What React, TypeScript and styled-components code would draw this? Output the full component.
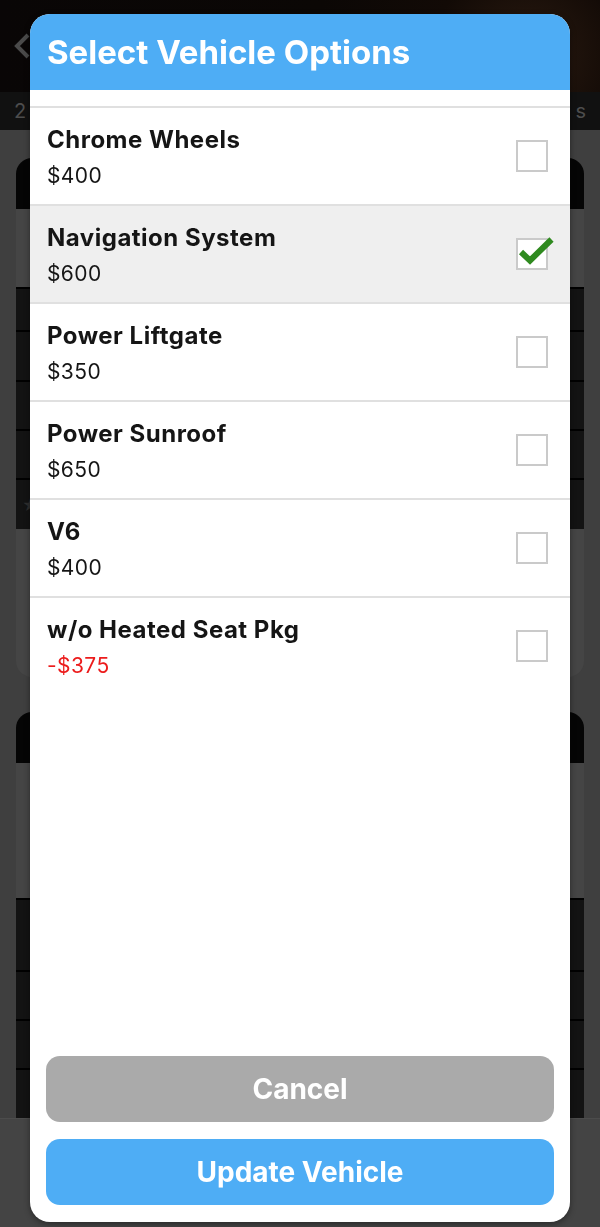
import React, { useState } from 'react';
import styled, { createGlobalStyle } from 'styled-components';

const GlobalStyle = createGlobalStyle`
    html, body {
        margin: 0;
        padding: 0;
        background: #3f3f3f;
        font-family: Inter, "Noto Sans", "Liberation Sans", sans-serif;
    }
    * {
        box-sizing: border-box;
    }
`;

const Page = styled.div`
    width: 600px;
    height: 1227px;
    overflow: hidden;
    background: #3f3f3f;
    display: flex;
    flex-direction: column;
`;

const TopBar = styled.div`
    height: 92px;
    flex-shrink: 0;
    display: flex;
    align-items: center;
    padding: 0 14px;
    background: radial-gradient(circle at 88% 60%, #2a1a10 0, #120a06 18%, #0b0705 40%, #090606 100%);
`;

const Strip = styled.div`
    height: 38px;
    flex-shrink: 0;
    display: flex;
    align-items: center;
    justify-content: space-between;
    padding: 0 14px;
    background: #111;
    color: #4d4d4d;
    font-size: 20px;
`;

const Body = styled.div`
    padding: 28px 16px 0;
    display: flex;
    flex-direction: column;
    gap: 35px;
`;

const Card = styled.div<{ $flatBottom?: boolean }>`
    background: #454545;
    border-radius: ${p => (p.$flatBottom ? '16px 16px 0 0' : '16px')};
    overflow: hidden;
`;

const CardHead = styled.div`
    height: 51px;
    background: #050505;
`;

const CardGap = styled.div<{ $h: number }>`
    height: ${p => p.$h}px;
`;

const DarkRow = styled.div<{ $h: number }>`
    height: ${p => p.$h}px;
    display: flex;
    align-items: center;
    padding-left: 6px;
    background: #131313;
    border-top: 2px solid #000;
    color: #2e2e2e;
    font-size: 16px;
`;

const TabBar = styled.div`
    flex: 1;
    background: #444;
    border-top: 1px solid #4c4c4c;
`;

const Overlay = styled.div`
    position: fixed;
    inset: 0;
    display: flex;
    justify-content: center;
    padding-top: 14px;
`;

const Modal = styled.div`
    width: 540px;
    height: 1208px;
    background: #fff;
    border-radius: 20px;
    overflow: hidden;
    display: flex;
    flex-direction: column;
    box-shadow: 0 2px 6px rgba(0, 0, 0, 0.4);
`;

const ModalHeader = styled.div`
    height: 76px;
    flex-shrink: 0;
    display: flex;
    align-items: center;
    padding: 0 17px;
    background: #4eadf5;
    color: #fff;
    font-size: 33px;
    font-weight: 700;
`;

const List = styled.div`
    padding-top: 16px;
    flex: 1;
`;

const Row = styled.div<{ $selected: boolean }>`
    height: 98px;
    display: flex;
    align-items: center;
    justify-content: space-between;
    padding: 0 22px 0 17px;
    border-top: 2px solid #e0e0e0;
    background: ${p => (p.$selected ? '#efefef' : '#fff')};
    cursor: pointer;
`;

const RowText = styled.div`
    display: flex;
    flex-direction: column;
    gap: 9px;
`;

const OptionName = styled.div`
    font-size: 24px;
    font-weight: 700;
    letter-spacing: 0.5px;
    color: #151515;
    line-height: 29px;
`;

const Price = styled.div<{ $negative: boolean }>`
    font-size: 21px;
    letter-spacing: 0.4px;
    line-height: 25px;
    color: ${p => (p.$negative ? '#ec1c1c' : '#151515')};
`;

const Box = styled.div`
    position: relative;
    width: 32px;
    height: 32px;
    border: 2px solid #cacaca;
    background: #fff;
`;

const Check = styled.svg`
    position: absolute;
    left: 0;
    top: -4px;
    width: 40px;
    height: 34px;
    overflow: visible;
`;

const Footer = styled.div`
    display: flex;
    flex-direction: column;
    gap: 17px;
    padding: 0 16px 17px;
`;

const Button = styled.button<{ $color: string }>`
    height: 66px;
    border: none;
    border-radius: 14px;
    background: ${p => p.$color};
    color: #fff;
    font-family: inherit;
    font-size: 28px;
    font-weight: 700;
    cursor: pointer;
`;

const options = [
    { name: 'Chrome Wheels', price: 400 },
    { name: 'Navigation System', price: 600 },
    { name: 'Power Liftgate', price: 350 },
    { name: 'Power Sunroof', price: 650 },
    { name: 'V6', price: 400 },
    { name: 'w/o Heated Seat Pkg', price: -375 },
];

const formatPrice = (n: number) => (n < 0 ? `-$${Math.abs(n)}` : `$${n}`);

const App: React.FC = () => {
    const [selected, setSelected] = useState<string[]>(['Navigation System']);

    const toggle = (name: string) => {
        setSelected(s => (s.includes(name) ? s.filter(x => x !== name) : [...s, name]));
    };

    return (
        <Page>
            <GlobalStyle />
            {/* dimmed screen behind the modal */}
            <TopBar>
                <svg width="16" height="26" viewBox="0 0 16 26">
                    <path d="M14 2 L3 13 L14 24" fill="none" stroke="#4a4a4a" strokeWidth="4" />
                </svg>
            </TopBar>
            <Strip>
                <span>2</span>
                <span>s</span>
            </Strip>
            <Body>
                <Card>
                    <CardHead />
                    <CardGap $h={78} />
                    <DarkRow $h={43} />
                    <DarkRow $h={50} />
                    <DarkRow $h={49} />
                    <DarkRow $h={49} />
                    <DarkRow $h={51}>★</DarkRow>
                    <CardGap $h={148} />
                </Card>
                <Card $flatBottom>
                    <CardHead />
                    <CardGap $h={135} />
                    <DarkRow $h={72} />
                    <DarkRow $h={49} />
                    <DarkRow $h={49} />
                    <DarkRow $h={50} />
                </Card>
            </Body>
            <TabBar />

            <Overlay>
                <Modal>
                    <ModalHeader>Select Vehicle Options</ModalHeader>
                    <List>
                        {options.map(o => {
                            const isOn = selected.includes(o.name);
                            return (
                                <Row key={o.name} $selected={isOn} onClick={() => toggle(o.name)}>
                                    <RowText>
                                        <OptionName>{o.name}</OptionName>
                                        <Price $negative={o.price < 0}>{formatPrice(o.price)}</Price>
                                    </RowText>
                                    <Box>
                                        {isOn && (
                                            <Check viewBox="0 0 40 34">
                                                <path d="M3 16 L12 24.5 L33.5 3.5" fill="none" stroke="#2f8a1f" strokeWidth="6" />
                                            </Check>
                                        )}
                                    </Box>
                                </Row>
                            );
                        })}
                    </List>
                    <Footer>
                        <Button $color="#aaaaaa">Cancel</Button>
                        <Button $color="#4eadf5">Update Vehicle</Button>
                    </Footer>
                </Modal>
            </Overlay>
        </Page>
    );
};

export default App;
